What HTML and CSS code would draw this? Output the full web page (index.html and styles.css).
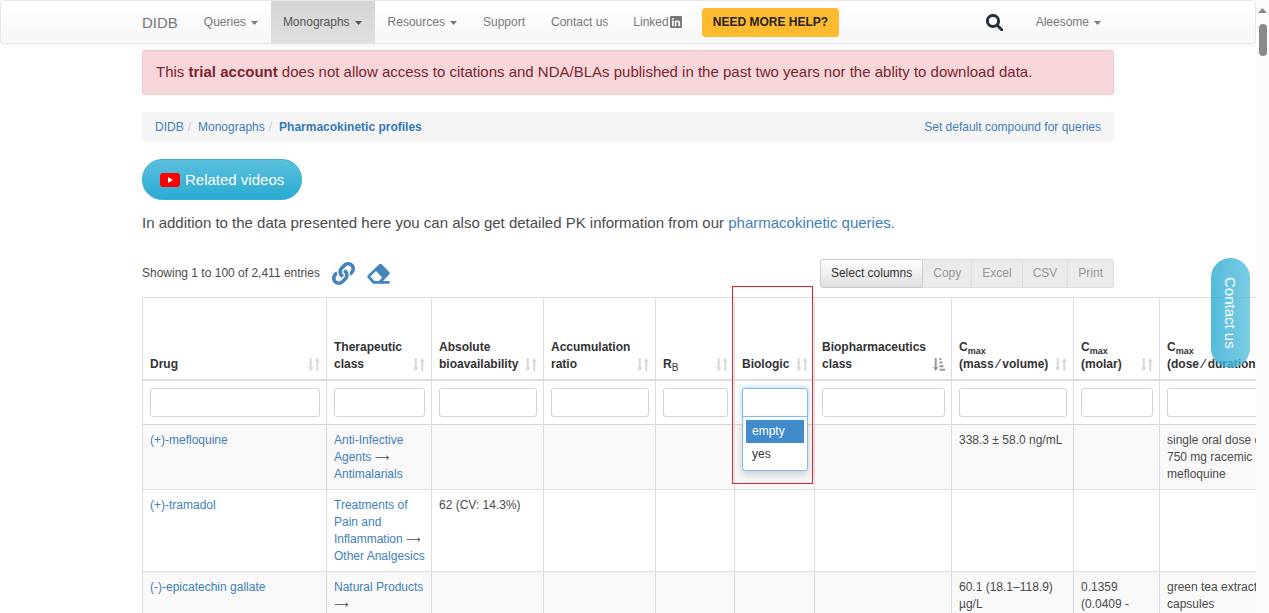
FILE: index.html
```html
<!DOCTYPE html>
<html lang="en">
<head>
<meta charset="utf-8">
<meta name="viewport" content="width=device-width, initial-scale=1">
<title>Pharmacokinetic profiles - DIDB</title>
<link rel="stylesheet" href="styles.css">
</head>
<body>
<svg class="sprite" aria-hidden="true">
  <symbol id="caret" viewBox="0 0 7 4"><path d="M0 0h7L3.5 4z"/></symbol>
  <symbol id="sort" viewBox="0 0 12 13"><path d="M1.7 0h2v9.300h1.700L2.700 13 0 9.300h1.700zM8.300 13h2V3.700H12L9.300 0 6.600 3.700h1.700z"/></symbol>
  <symbol id="sorted" viewBox="0 0 12 13"><path d="M1.700 0h2v9.300h1.700L2.700 13 0 9.300h1.700zM6.400 0h2v2h-2zM6.400 3.600h3v2h-3zM6.400 7.200h4.200v2H6.400zM6.400 10.800H12v2H6.400z"/></symbol>
</svg>
<div class="window">
  <div class="page">
    <nav class="navbar">
      <div class="container navbar-inner">
        <a class="brand" href="#">DIDB</a>
        <ul class="nav">
          <li><a href="#">Queries <svg class="caret"><use href="#caret"/></svg></a></li>
          <li><a class="active" href="#">Monographs <svg class="caret"><use href="#caret"/></svg></a></li>
          <li><a href="#">Resources <svg class="caret"><use href="#caret"/></svg></a></li>
          <li><a href="#">Support</a></li>
          <li><a href="#">Contact us</a></li>
          <li><a class="linked" href="#">Linked<svg class="linkedin" viewBox="0 0 12 12"><path fill-rule="evenodd" d="M1 0h10a1 1 0 0 1 1 1v10a1 1 0 0 1-1 1H1a1 1 0 0 1-1-1V1a1 1 0 0 1 1-1zM2 4.500v5.700h1.700V4.500zM2 2v1.600h1.700V2zM4.800 4.500v5.700h1.700V7c0-1.500 1.900-1.500 1.900 0v3.200h1.700V6.700c0-2.500-2.600-2.900-3.600-1.400v-.8z"/></svg></a></li>
        </ul>
        <button class="help" type="button">NEED MORE HELP?</button>
        <button class="search" type="button" aria-label="Search"><svg viewBox="0 0 17 17"><circle cx="7" cy="7" r="5.600"/><path d="M11 11l5 5"/></svg></button>
        <ul class="nav"><li><a href="#">Aleesome <svg class="caret"><use href="#caret"/></svg></a></li></ul>
      </div>
    </nav>
    <main class="container content">
      <div class="alert" role="alert">This <strong>trial account</strong> does not allow access to citations and NDA/BLAs published in the past two years nor the ablity to download data.</div>
      <div class="crumb-bar">
        <ol class="crumbs">
          <li><a href="#">DIDB</a></li>
          <li><a href="#">Monographs</a></li>
          <li><a href="#"><strong>Pharmacokinetic profiles</strong></a></li>
        </ol>
        <a href="#">Set default compound for queries</a>
      </div>
      <button class="videos" type="button"><svg viewBox="0 0 20 14"><rect width="20" height="14" rx="3" fill="#f00"/><path d="M8 4v6l5-3z" fill="#fff"/></svg>Related videos</button>
      <p class="lead">In addition to the data presented here you can also get detailed PK information from our <a href="#">pharmacokinetic queries.</a></p>
      <div class="toolbar">
        <span>Showing 1 to 100 of 2,411 entries</span>
        <a class="tool" href="#" aria-label="Link to this table"><svg viewBox="0 0 512 512"><path d="M326.612 185.391c59.747 59.809 58.927 155.698.36 214.590-.11.12-.24.25-.36.37l-67.200 67.200c-59.270 59.270-155.699 59.262-214.960 0-59.270-59.260-59.270-155.700 0-214.960l37.106-37.106c9.840-9.840 26.786-3.300 27.294 10.606.648 17.722 3.826 35.527 9.690 52.721 1.986 5.822.567 12.262-3.783 16.612l-13.087 13.087c-28.026 28.026-28.905 73.660-1.155 101.960 28.024 28.579 74.086 28.749 102.325.51l67.200-67.190c28.191-28.191 28.073-73.757 0-101.830-3.701-3.694-7.429-6.564-10.341-8.569a16.037 16.037 0 0 1-6.947-12.606c-.396-10.567 3.348-21.456 11.698-29.806l21.054-21.055c5.521-5.521 14.182-6.199 20.584-1.731a152.482 152.482 0 0 1 20.522 17.197zM467.547 44.449c-59.261-59.262-155.690-59.270-214.960 0l-67.200 67.200c-.12.12-.25.25-.36.37-58.566 58.892-59.387 154.781.36 214.590a152.454 152.454 0 0 0 20.521 17.196c6.402 4.468 15.064 3.789 20.584-1.731l21.054-21.055c8.350-8.350 12.094-19.239 11.698-29.806a16.037 16.037 0 0 0-6.947-12.606c-2.912-2.005-6.640-4.875-10.341-8.569-28.073-28.073-28.191-73.639 0-101.830l67.200-67.190c28.239-28.239 74.300-28.069 102.325.51 27.750 28.300 26.872 73.934-1.155 101.960l-13.087 13.087c-4.350 4.350-5.769 10.790-3.783 16.612 5.864 17.194 9.042 34.999 9.690 52.721.509 13.906 17.454 20.446 27.294 10.606l37.106-37.106c59.271-59.259 59.271-155.699.001-214.959z"/></svg></a>
        <a class="tool" href="#" aria-label="Clear filters"><svg viewBox="0 0 23 23"><path fill-rule="evenodd" d="M.8 13.200L12.200 2.300q1.200-1 2.400 0l7.600 7.700q1 1.200 0 2.400L16 19h6q.7 0 .7.700v1.400q0 .7-.7.700H6.800q-.8 0-1.400-.6L.8 15.800q-1-1.300 0-2.600zM9 9l-5.700 5.500L7.500 19h4.300l3.400-3.500z"/></svg></a>
        <div class="buttons">
          <button type="button">Select columns</button>
          <button type="button" disabled>Copy</button>
          <button type="button" disabled>Excel</button>
          <button type="button" disabled>CSV</button>
          <button type="button" disabled>Print</button>
        </div>
      </div>
      <table class="grid">
        <colgroup><col class="c-drug"><col class="c-class"><col class="c-abs"><col class="c-acc"><col class="c-rb"><col class="c-bio"><col class="c-bcs"><col class="c-mass"><col class="c-molar"><col class="c-dose"></colgroup>
        <thead>
          <tr class="heads">
            <th scope="col"><div class="head"><span>Drug</span><svg><use href="#sort"/></svg></div></th>
            <th scope="col"><div class="head"><span>Therapeutic<br>class</span><svg><use href="#sort"/></svg></div></th>
            <th scope="col"><div class="head"><span>Absolute<br>bioavailability</span><svg><use href="#sort"/></svg></div></th>
            <th scope="col"><div class="head"><span>Accumulation<br>ratio</span><svg><use href="#sort"/></svg></div></th>
            <th scope="col"><div class="head"><span>R<sub class="plain">B</sub></span><svg><use href="#sort"/></svg></div></th>
            <th scope="col" class="marked"><div class="head"><span>Biologic</span><svg><use href="#sort"/></svg></div><div class="marker"></div></th>
            <th scope="col"><div class="head"><span>Biopharmaceutics<br>class</span><svg class="on"><use href="#sorted"/></svg></div></th>
            <th scope="col"><div class="head"><span>C<sub>max</sub><br>(mass&nbsp;⁄&nbsp;volume)</span><svg><use href="#sort"/></svg></div></th>
            <th scope="col"><div class="head"><span>C<sub>max</sub><br>(molar)</span><svg><use href="#sort"/></svg></div></th>
            <th scope="col"><div class="head"><span>C<sub>max</sub><br>(dose&nbsp;⁄&nbsp;duration)</span><svg><use href="#sort"/></svg></div></th>
          </tr>
          <tr class="filters">
            <td><input type="text" aria-label="Filter drug"></td>
            <td><input type="text" aria-label="Filter therapeutic class"></td>
            <td><input type="text" aria-label="Filter absolute bioavailability"></td>
            <td><input type="text" aria-label="Filter accumulation ratio"></td>
            <td><input type="text" aria-label="Filter RB"></td>
            <td><div class="combo"><input class="open" type="text" role="combobox" aria-expanded="true" aria-controls="biologic-options" aria-label="Filter biologic">
              <ul class="options" id="biologic-options" role="listbox"><li class="selected" role="option" aria-selected="true">empty</li><li role="option" aria-selected="false">yes</li></ul></div></td>
            <td><input type="text" aria-label="Filter biopharmaceutics class"></td>
            <td><input type="text" aria-label="Filter Cmax mass per volume"></td>
            <td><input type="text" aria-label="Filter Cmax molar"></td>
            <td><input type="text" aria-label="Filter Cmax dose and duration"></td>
          </tr>
        </thead>
        <tbody>
          <tr>
            <td><a href="#">(+)-mefloquine</a></td>
            <td><a href="#">Anti-Infective Agents</a> <span class="arrow">⟶</span> <a href="#">Antimalarials</a></td>
            <td></td><td></td><td></td><td></td><td></td>
            <td>338.3 ± 58.0 ng/mL</td><td></td>
            <td>single oral dose of 750 mg racemic mefloquine</td>
          </tr>
          <tr>
            <td><a href="#">(+)-tramadol</a></td>
            <td><a href="#">Treatments of Pain and Inflammation</a> <span class="arrow">⟶</span> <a href="#">Other Analgesics</a></td>
            <td>62 (CV: 14.3%)</td>
            <td></td><td></td><td></td><td></td><td></td><td></td><td></td>
          </tr>
          <tr>
            <td><a href="#">(-)-epicatechin gallate</a></td>
            <td><a href="#">Natural Products</a> <span class="arrow">⟶</span></td>
            <td></td><td></td><td></td><td></td><td></td>
            <td>60.1 (18.1–118.9) µg/L</td>
            <td>0.1359 (0.0409 -</td>
            <td>green tea extract capsules</td>
          </tr>
        </tbody>
      </table>
    </main>
  </div>
  <div class="scrollbar" aria-hidden="true"><svg viewBox="0 0 9 5"><path d="M4.500 0L9 5H0z"/></svg><div class="thumb"></div></div>
</div>
<button class="contact" type="button">Contact us</button>
</body>
</html>
```
FILE: styles.css
```css
* { box-sizing: border-box; }
body {
  margin: 0;
  background: #fff;
  color: #4b4b4b;
  font: 12px/17px "Liberation Sans", Arial, sans-serif;
}
a { color: #417fb9; text-decoration: none; }
button, input { font: inherit; }
ul, ol { list-style: none; margin: 0; padding: 0; }
.sprite { display: none; }
.window { display: flex; height: 100vh; overflow: hidden; }
.page { flex: 1; min-width: 0; overflow: hidden; }
.container { width: 100%; max-width: 972px; margin: 0 auto; }

/* Top bar */
.navbar {
  border: 1px solid #e7e7e7;
  border-radius: 3px;
  background: linear-gradient(#fff, #f7f7f7);
  box-shadow: 0 1px 4px rgba(0, 0, 0, .08);
}
.navbar-inner { display: flex; align-items: center; }
.brand { padding-right: 13px; color: #777; font-size: 15px; }
.nav { display: flex; }
.nav a { display: flex; align-items: center; height: 42px; padding: 0 13px; color: #777; white-space: nowrap; }
.nav .active { background: linear-gradient(#d4d4d4, #dfdfdf); color: #555; }
.nav .linked { padding: 0 20px 0 12px; }
.caret { width: 7px; height: 4px; margin: 2px 0 0 5px; fill: currentColor; }
.nav .active, .nav .active + a { padding-left: 12px; }
.linkedin { width: 12px; height: 12px; margin-left: 1px; fill: #777; }
.help {
  height: 29px;
  padding: 0 10px;
  border: 1px solid #ffb92e;
  border-radius: 3px;
  background: #ffbb2f;
  color: #222;
  font-weight: bold;
  white-space: nowrap;
}
.search { display: flex; margin-left: auto; padding: 0 20px; border: 0; background: none; }
.search svg { width: 17px; height: 17px; fill: none; stroke: #233343; stroke-width: 3; stroke-linecap: round; }

/* Notices and breadcrumb */
.content { padding-top: 6px; }
.alert {
  padding: 10px 13px 12px;
  border: 1px solid #f5c6cb;
  border-radius: 3px;
  background: #f8d7da;
  color: #7d2431;
  font-size: 15px;
  line-height: 21px;
}
.crumb-bar {
  display: flex;
  justify-content: space-between;
  margin: 17px 0;
  padding: 7px 13px 6px;
  border-radius: 3px;
  background: #f5f5f5;
}
.crumbs { display: flex; }
.crumbs li + li::before { content: "/"; padding: 0 7px 0 4px; color: #ccc; }
.crumbs strong { color: #337ab7; }
.videos {
  display: flex;
  align-items: center;
  gap: 5px;
  height: 41px;
  padding: 0 17px;
  border: 1px solid #3fb0d3;
  border-radius: 20px;
  background: linear-gradient(#5bc0de, #2aabd2);
  color: #fff;
  font-size: 15px;
}
.videos svg { width: 20px; height: 14px; }
.lead { margin: 12px 0 25px; font-size: 15px; line-height: 22px; }

/* Table tools */
.toolbar { display: flex; align-items: center; margin-bottom: 9px; }
.tool { display: flex; margin-left: 12px; }
.tool svg { width: 23px; height: 23px; fill: #4384bf; }
.buttons { display: flex; margin-left: auto; }
.buttons button {
  height: 29px;
  padding: 0 10px;
  border: 1px solid #ddd;
  border-left-width: 0;
  background: #ebebeb;
  color: #999;
}
.buttons button:first-child {
  border: 1px solid #ccc;
  border-radius: 3px 0 0 3px;
  background: linear-gradient(#fff, #e0e0e0);
  color: #333;
}
.buttons button:last-child { border-radius: 0 3px 3px 0; }

/* Data table */
.grid { width: 1142px; table-layout: fixed; border-collapse: collapse; }
.c-drug { width: 184px; }
.c-class { width: 105px; }
.c-abs, .c-acc { width: 112px; }
.c-rb { width: 79px; }
.c-bio { width: 80px; }
.c-bcs { width: 137px; }
.c-mass { width: 122px; }
.c-molar { width: 86px; }
.c-dose { width: 125px; }
.grid th, .grid td { padding: 7px 6px 6px 7px; border: 1px solid #ddd; text-align: left; vertical-align: top; }
.grid .heads th { height: 82px; border-bottom: 2px solid #ddd; color: #333; vertical-align: bottom; }
.grid .filters td { padding-bottom: 7px; border-bottom-color: #d5d5d5; }
.grid tbody tr:nth-child(odd) { background: #f9f9f9; }
.head { display: flex; align-items: flex-end; justify-content: space-between; white-space: nowrap; }
.head svg { flex: none; width: 12px; height: 13px; margin-bottom: 2px; fill: #d8d8d8; }
.head .on { fill: #999; }
sub { font-size: 9px; line-height: 0; }
.plain { font-weight: normal; font-size: 10px; }
.arrow { font: 10px/12px "DejaVu Sans", sans-serif; }
.filters input {
  display: block;
  width: 100%;
  height: 29px;
  padding: 0 8px;
  border: 1px solid #d2d2d2;
  border-radius: 3px;
  background: #fff;
  outline: 0;
}
.filters .open {
  border-color: #80bdee;
  border-radius: 3px 3px 0 0;
  box-shadow: 0 0 6px rgba(102, 175, 233, .6);
}
.combo { position: relative; }
.options {
  position: absolute;
  top: 28px;
  left: 0;
  right: 0;
  padding: 3px 3px 4px;
  border: 1px solid #80bdee;
  border-radius: 0 0 3px 3px;
  background: #fff;
  box-shadow: 0 4px 8px rgba(0, 0, 0, .18);
  color: #333;
}
.options li { padding: 3px 6px; }
.options .selected { background: #428bca; color: #fff; }
.marked { position: relative; }
.marker { position: absolute; z-index: 2; top: -12px; left: -3px; width: 81px; height: 198px; border: 1px solid #ee1c25; pointer-events: none; }

/* Floating button */
.contact {
  position: fixed;
  top: 258px;
  right: 19px;
  padding: 19px 8px;
  border: 0;
  border-radius: 20px;
  background: linear-gradient(to left, #5bc0de, #2aabd2);
  color: #fff;
  font-size: 15px;
  line-height: 23px;
  writing-mode: vertical-rl;
  opacity: .8;
}

.scrollbar { display: flex; flex-direction: column; align-items: center; gap: 11px; width: 13px; padding-top: 8px; background: #fbfbfb; }
.scrollbar svg { width: 9px; height: 5px; fill: #888; }
.thumb { width: 8px; height: 32px; border-radius: 4px; background: #8a8a8a; }
```
